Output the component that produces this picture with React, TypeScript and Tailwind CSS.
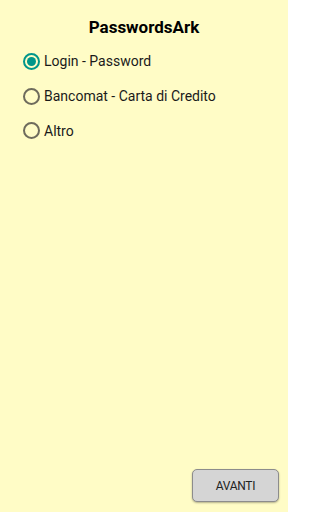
import React, { useState } from "react";

const options = ["Login - Password", "Bancomat - Carta di Credito", "Altro"];

export default function App() {
  const [sel, setSel] = useState(0);
  return (
    <div
      className="w-[288px] h-[512px] bg-[#fffcc6] flex flex-col"
      style={{ fontFamily: "Roboto, 'Liberation Sans', sans-serif" }}
    >
      <div className="pt-[16px] h-[40px] text-center text-[17px] font-bold text-black leading-[22px]">
        PasswordsArk
      </div>
      <div className="flex flex-col pl-[23px] pt-[4px]">
        {options.map((o, i) => (
          <div
            key={o}
            className="flex items-center h-[34.7px] gap-[4px] cursor-pointer"
            onClick={() => setSel(i)}
          >
            <div
              className={`w-[17px] h-[17px] rounded-full border-2 flex items-center justify-center ${
                sel === i ? "border-[#00968a]" : "border-[#6e6b5c]"
              }`}
            >
              {sel === i && <div className="w-[9px] h-[9px] rounded-full bg-[#00968a]" />}
            </div>
            <span className="text-[14px] text-[#1a1a1a] leading-[18px]">{o}</span>
          </div>
        ))}
      </div>
      <div className="flex-1" />
      <div className="flex justify-end pr-[9px] pb-[10px]">
        <button className="w-[87px] h-[33px] rounded-[5px] bg-[#d5d5d5] border border-[#8c8c8c] shadow-[0_1px_2px_rgba(0,0,0,0.3)] text-[12px] text-[#222] tracking-[-0.3px]">
          AVANTI
        </button>
      </div>
    </div>
  );
}
